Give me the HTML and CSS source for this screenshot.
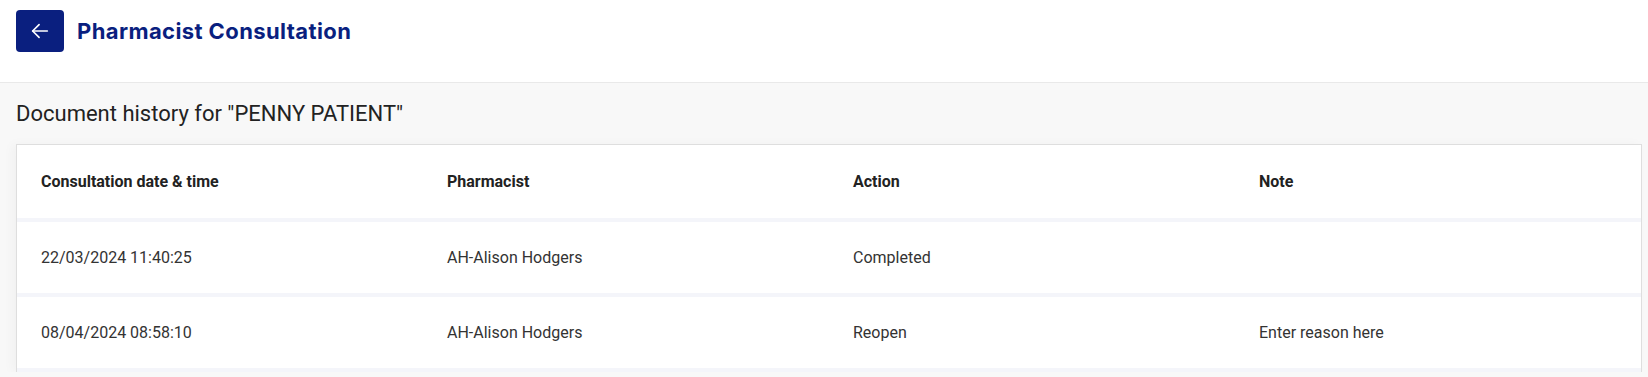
FILE: index.html
```html
<!DOCTYPE html>
<html lang="en">

<head>
    <meta charset="UTF-8">
    <meta name="viewport" content="width=device-width, initial-scale=1.0">
    <title>Pharmacist Consultation - Document history</title>
    <link rel="stylesheet" href="styles.css">
</head>

<body>
    <header class="top-bar">
        <button class="back-button" aria-label="Back">
            <svg width="22" height="22" viewBox="0 0 24 24" fill="none" stroke="#ffffff" stroke-width="1.8" stroke-linecap="round" stroke-linejoin="round">
                <line x1="20" y1="12" x2="4" y2="12"></line>
                <polyline points="11 5 4 12 11 19"></polyline>
            </svg>
        </button>
        <h1 class="page-title">Pharmacist Consultation</h1>
    </header>

    <main class="content">
        <h2 class="section-title">Document history for "PENNY PATIENT"</h2>

        <div class="history-table">
            <div class="history-row head">
                <div class="cell">Consultation date &amp; time</div>
                <div class="cell">Pharmacist</div>
                <div class="cell">Action</div>
                <div class="cell">Note</div>
            </div>
            <div class="history-row">
                <div class="cell">22/03/2024 11:40:25</div>
                <div class="cell">AH-Alison Hodgers</div>
                <div class="cell">Completed</div>
                <div class="cell"></div>
            </div>
            <div class="history-row">
                <div class="cell">08/04/2024 08:58:10</div>
                <div class="cell">AH-Alison Hodgers</div>
                <div class="cell">Reopen</div>
                <div class="cell">Enter reason here</div>
            </div>
        </div>
    </main>
</body>

</html>
```

FILE: styles.css
```css
:root {
    --navy: #0a1f7f;
    --page-bg: #f8f8f8;
    --row-gap: #f4f5fa;
    --border: #dedede;
    --text-color: #222222;
}

* {
    margin: 0;
    padding: 0;
    box-sizing: border-box;
}

body {
    background-color: var(--page-bg);
    color: var(--text-color);
    font-family: Roboto, 'Liberation Sans', sans-serif;
}

.top-bar {
    height: 83px;
    background-color: #ffffff;
    border-bottom: 1px solid #e9e9e9;
    display: flex;
    align-items: flex-start;
    gap: 13px;
    padding: 10px 16px 0;
}

.back-button {
    width: 48px;
    height: 42px;
    border: none;
    border-radius: 4px;
    background-color: var(--navy);
    display: flex;
    align-items: center;
    justify-content: center;
    cursor: pointer;
}

.page-title {
    font-family: Inter, 'Open Sans', sans-serif;
    font-size: 22px;
    font-weight: 700;
    letter-spacing: 0.4px;
    color: var(--navy);
    line-height: 42px;
}

.content {
    padding: 0 6px 0 16px;
}

.section-title {
    font-size: 22px;
    font-weight: 400;
    color: #222;
    line-height: 26px;
    padding: 18px 0 17px;
}

.history-table {
    display: flex;
    flex-direction: column;
    gap: 4px;
    background-color: var(--row-gap);
    border: 1px solid var(--border);
    border-bottom: none;
    padding-bottom: 4px;
    box-shadow: -4px 0 10px rgba(0, 0, 0, 0.03);
}

.history-row {
    display: grid;
    grid-template-columns: repeat(4, 1fr);
    background-color: #ffffff;
    height: 71px;
    align-items: center;
}

.history-row.head {
    height: 73px;
}

.cell {
    padding-left: 24px;
    font-size: 16px;
    color: #333;
}

.head .cell {
    font-weight: 700;
    color: #222;
}
```
